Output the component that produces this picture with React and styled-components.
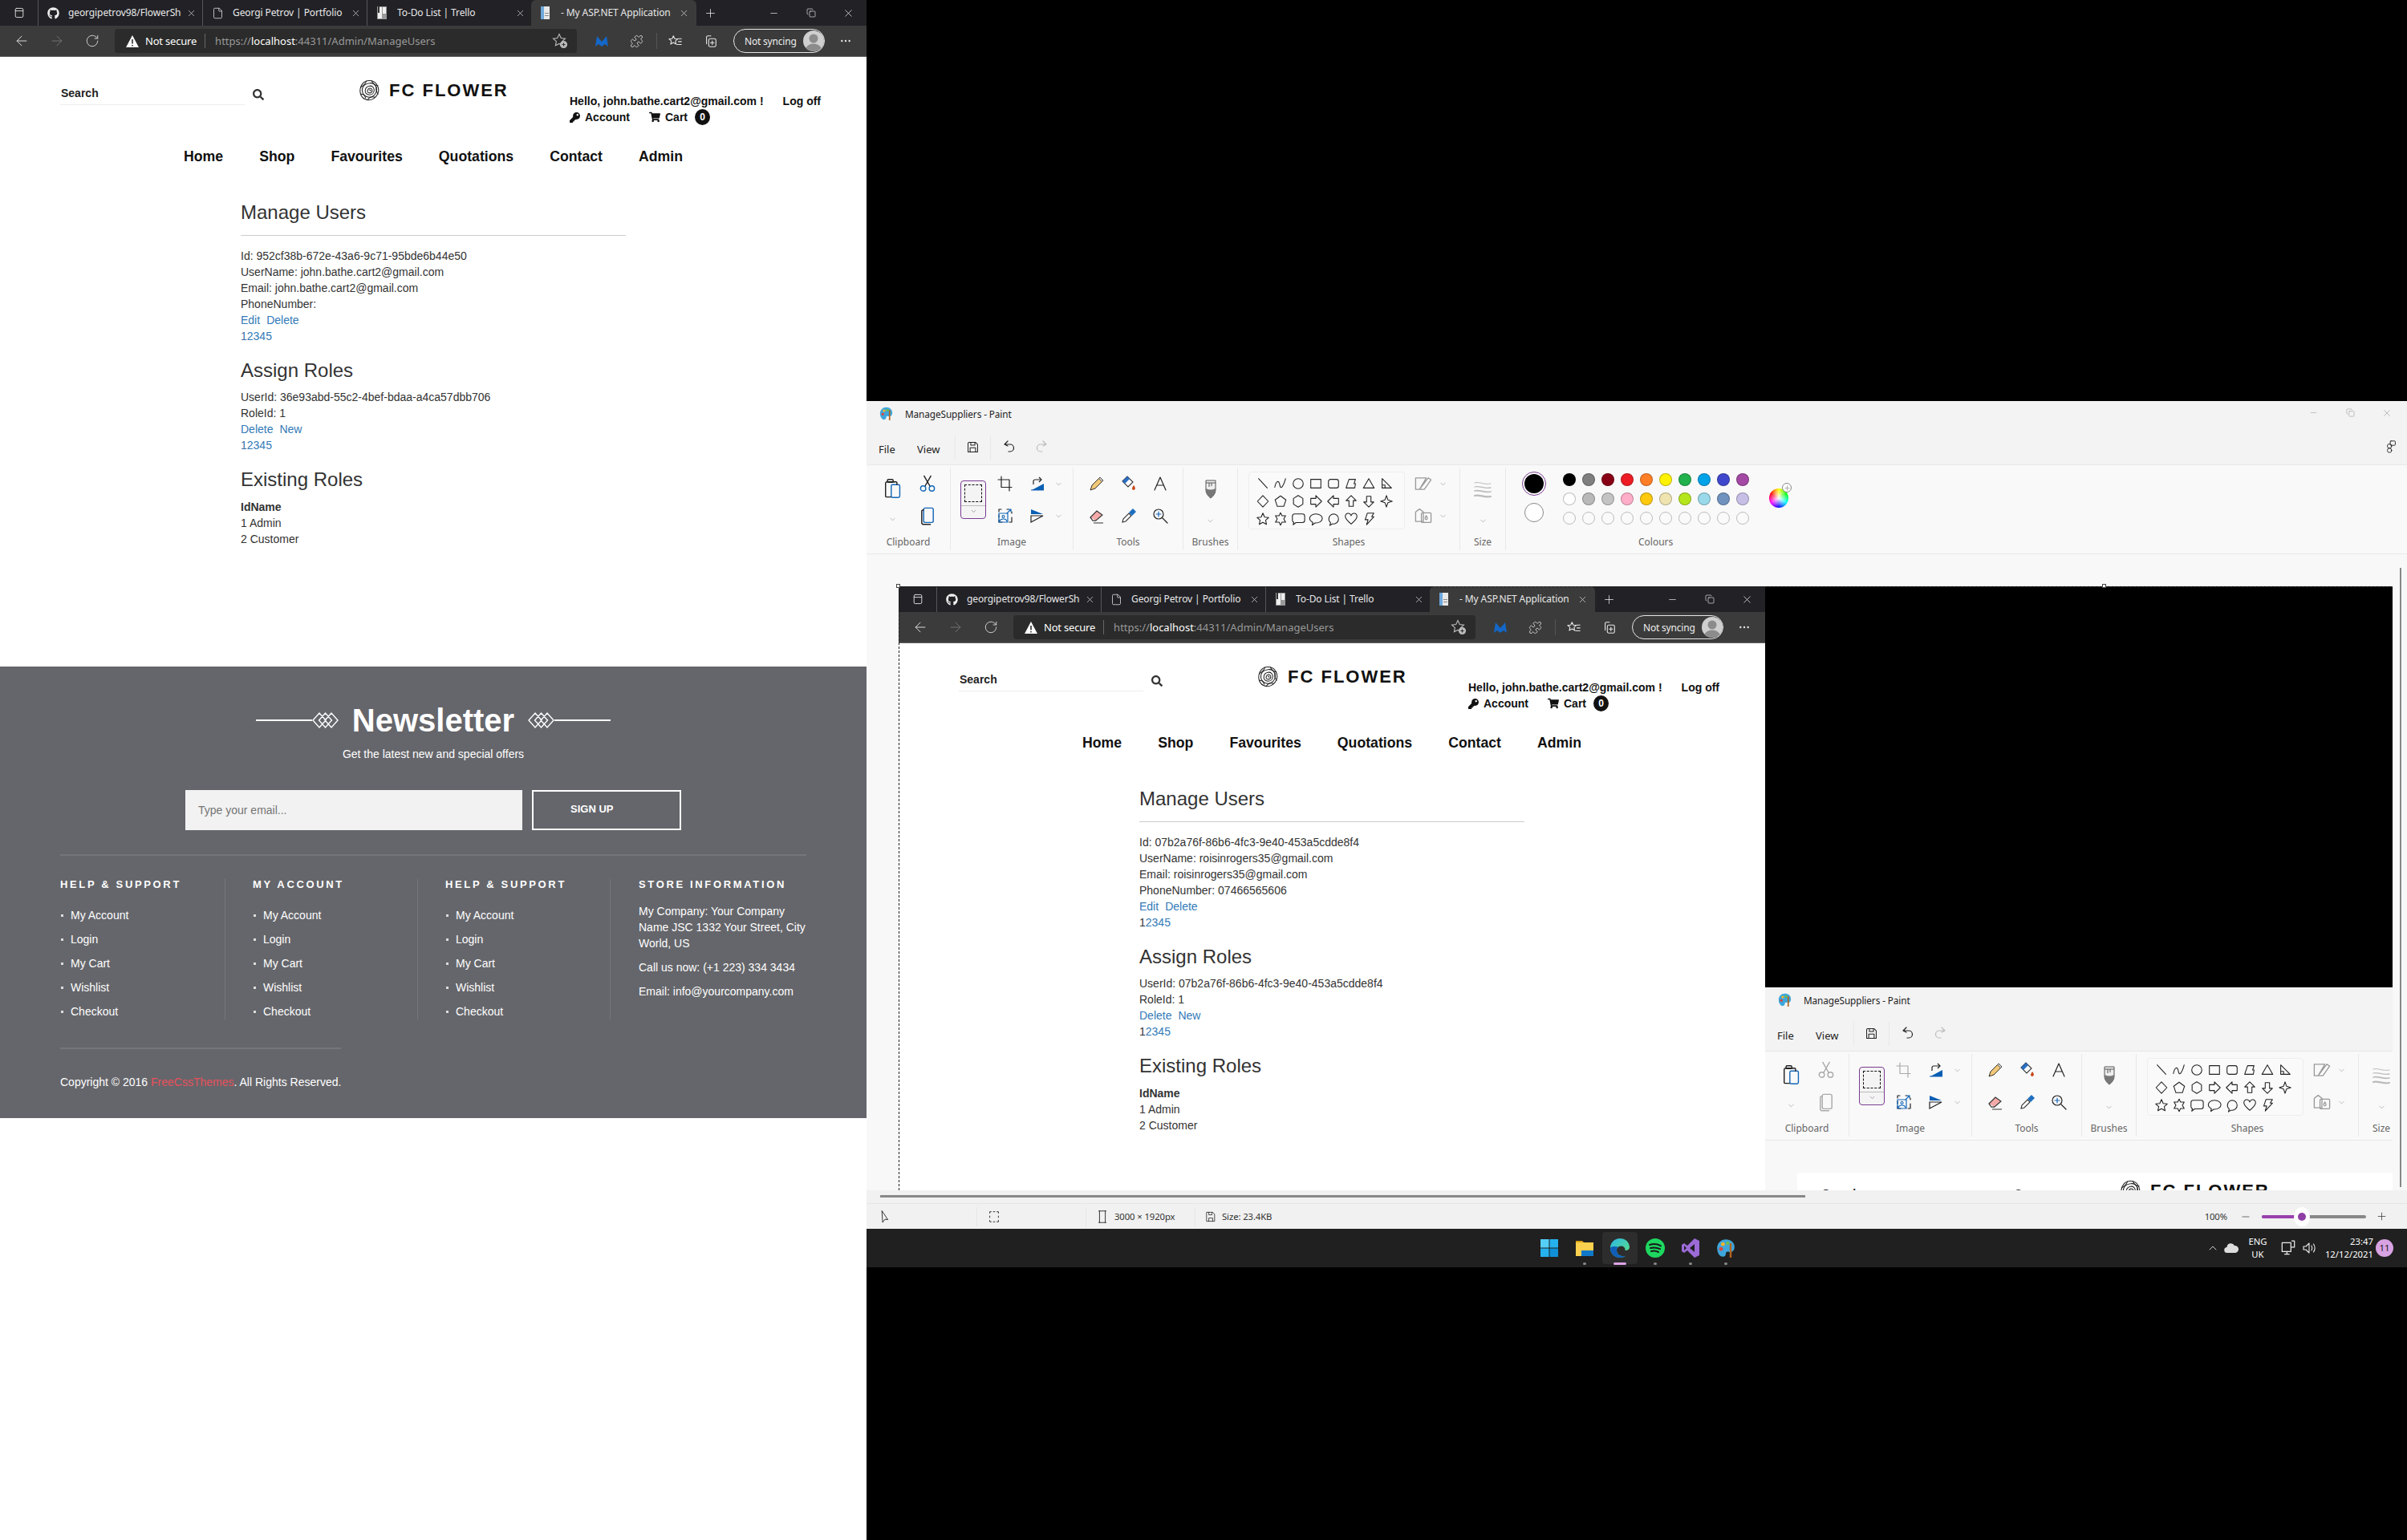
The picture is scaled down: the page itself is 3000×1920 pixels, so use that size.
import React from 'react';
import styled, { createGlobalStyle } from 'styled-components';
import { ArrowLeft, ArrowRight, RotateCw, Plus, Minus, X, File, Puzzle, MoreHorizontal, Copy, ChevronDown, ChevronUp } from 'lucide-react';
import { FaKey, FaShoppingCart, FaSearch, FaGithub } from 'react-icons/fa';

const Global = createGlobalStyle`
  html, body { margin: 0; padding: 0; background: #000; }
  * { box-sizing: border-box; }
`;

const UI = `"Noto Sans", "Open Sans", sans-serif`;
const WEB = `"Liberation Sans", Arial, sans-serif`;

/* ---------- desktop layout ---------- */
const Desk = styled.div`
  display: flex; width: 3000px; height: 1920px; background: #000; overflow: hidden; flex: none;
`;
const BrowserCol = styled.div`
  width: 1080px; flex: none; height: 1920px; background: #fff; display: flex; flex-direction: column;
`;
const RightCol = styled.div`
  width: 1920px; flex: none; height: 1920px; display: flex; flex-direction: column;
`;
const BlackGap = styled.div`
  flex: 0 0 500px; background: #000;
`;

/* ---------- browser chrome ---------- */
const TabBar = styled.div`
  height: 32px; background: #212126; display: flex; align-items: stretch; color: #fff; font: 12px/32px ${UI};
`;
const TabStripBtn = styled.div`
  width: 47px; display: flex; align-items: center; justify-content: center;
`;
const Tab = styled.div`
  width: ${p => (p.$active ? 206 : 205)}px; display: flex; align-items: center; padding-left: 10px; position: relative;
  background: ${p => (p.$active ? '#3b3b3b' : 'transparent')};
  border-radius: ${p => (p.$active ? '6px 6px 0 0' : '0')};
  border-left: ${p => (p.$active ? 'none' : '1px solid #55555a')};
`;
const TabIcon = styled.div`
  width: 16px; height: 16px; flex: none; display: flex; align-items: center; justify-content: center; margin-right: 11px;
`;
const TabText = styled.div`
  width: 141px; overflow: hidden; white-space: nowrap; flex: none; color: #e8e8e8; letter-spacing: -0.1px;
`;
const TabClose = styled.div`
  width: 16px; display: flex; justify-content: center; margin-left: 4px; color: #ddd;
`;
const NewTab = styled.div`
  width: 32px; display: flex; align-items: center; justify-content: center; margin-left: 1px;
`;
const Spacer = styled.div`
  flex: 1;
`;
const WinBtn = styled.div`
  width: ${p => p.$w || 46}px; display: flex; align-items: center; justify-content: center; color: ${p => p.$c || '#fff'};
`;
const Toolbar = styled.div`
  height: 39px; background: #3b3b3b; border-bottom: 1px solid #646464; display: flex; align-items: center; padding-left: 5px; color: #fff;
`;
const NavBtn = styled.div`
  width: ${p => p.$w || 44}px; height: 30px; flex: none; display: flex; align-items: center; justify-content: center;
  color: ${p => (p.$dim ? '#777' : '#e8e8e8')};
`;
const Address = styled.div`
  width: 576px; height: 30px; margin: 0 10px 0 6px; flex: none; background: #2b2b2b; border-radius: 4px;
  display: flex; align-items: center; padding-left: 13px; font: 13px ${UI}; color: #9a9a9a; white-space: nowrap;
`;
const NotSecure = styled.span`
  color: #fff; margin-left: 7px; letter-spacing: -0.2px;
`;
const AddrSep = styled.div`
  width: 1px; height: 18px; background: #666; margin: 0 12px 0 10px;
`;
const Bright = styled.span`
  color: #fff;
`;
const AddrStar = styled.div`
  margin-left: auto; margin-right: 11px; display: flex; color: #bbb;
`;
const ToolSep = styled.div`
  width: 1px; height: 20px; background: #555; margin: 0 2px; flex: none;
`;
const SyncPill = styled.div`
  width: 114px; height: 30px; margin-left: 5px; border: 1.5px solid #e6e6e6; border-radius: 15px; flex: none;
  display: flex; align-items: center; padding-left: 13px; font: 12px ${UI}; color: #eee; gap: 8px; white-space: nowrap; letter-spacing: -0.2px;
`;
const Avatar = styled.div`
  width: 26px; height: 26px; border-radius: 50%; background: #cfcfcf; overflow: hidden; display: flex; flex: none;
`;

/* ---------- web page ---------- */
const WebPage = styled.div`
  font: 14px/20px ${WEB}; color: #333; flex: 1;
`;
const HeaderRow = styled.div`
  height: 91px; width: 1080px; display: grid; grid-template-columns: 372px 263px 1fr; padding-left: 75px; background: #fff; color: #111;
`;
const SearchCol = styled.div`
  padding-top: 30px; display: flex; align-items: flex-start;
`;
const SearchField = styled.div`
  width: 230px; height: 30px; border-bottom: 1px solid #eee; font: bold 14px/30px ${WEB}; color: #222; padding-left: 1px;
`;
const SearchIcon = styled.div`
  margin: 10px 0 0 10px; color: #333; display: flex;
`;
const LogoCol = styled.div`
  padding-top: 28px; display: flex; align-items: flex-start; gap: 11px; font: bold 22px/28px ${WEB}; letter-spacing: 2px; color: #111; white-space: nowrap;
`;
const AccountCol = styled.div`
  padding-top: 45px; font: bold 14px/20px ${WEB}; color: #111; white-space: nowrap;
`;
const AccountRow = styled.div`
  display: flex; align-items: center; height: 20px;
`;
const LogOff = styled.span`
  margin-left: 24px;
`;
const AccountLink = styled.span`
  display: inline-flex; align-items: center; gap: 6px; margin-right: ${p => p.$mr || 0}px;
`;
const Badge = styled.span`
  width: 19px; height: 20px; border-radius: 50%; background: #111; color: #fff; font: bold 12px/20px ${WEB}; text-align: center; margin-left: 9px;
`;
const NavRow = styled.nav`
  height: 66px; padding-left: 229px; display: flex; align-items: center; gap: 45px; font: bold 17.7px ${WEB}; color: #111; white-space: nowrap;
`;
const Main = styled.main`
  height: 603px; padding: 24px 0 0 300px;
`;
const Title = styled.h2`
  margin: ${p => p.$mt || 0}px 0 ${p => p.$mb || 0}px; font: 400 24px/26px ${WEB}; color: #333; width: 480px;
`;
const Rule = styled.hr`
  margin: 15px 0; width: 480px; border: 0; border-top: 1px solid #ccc; height: 1px;
`;
const Line = styled.div`
  height: 20px; white-space: nowrap; font-weight: ${p => (p.$bold ? 700 : 400)};
`;
const A = styled.span`
  color: #337ab7; margin-right: ${p => p.$mr || 0}px;
`;
const Dark = styled.span`
  color: ${p => p.$c};
`;

/* ---------- footer ---------- */
const Footer = styled.footer`
  height: 563px; background: #65666b; color: #fff; padding-top: 44px; font: 14px/20px ${WEB}; overflow: hidden;
`;
const NewsRow = styled.div`
  height: 46px; display: flex; align-items: center; justify-content: center; gap: 17px;
`;
const NewsTitle = styled.div`
  font: bold 40px/46px ${WEB}; color: #fff;
`;
const NewsOrn = styled.div`
  display: flex; align-items: center; flex-direction: ${p => (p.$rev ? 'row-reverse' : 'row')};
`;
const OrnLine = styled.div`
  width: 70px; height: 2px; background: #fff;
`;
const NewsSub = styled.div`
  margin-top: 9px; text-align: center; height: 20px;
`;
const SignForm = styled.div`
  margin: 35px 0 0 231px; display: flex; gap: 12px;
`;
const EmailBox = styled.div`
  width: 420px; height: 50px; background: #f2f2f2; color: #757575; font: 14px/50px ${WEB}; padding-left: 16px;
`;
const SignBtn = styled.div`
  width: 186px; height: 50px; border: 2.5px solid #fff; font: bold 13px/43px ${WEB}; padding-left: 46px;
`;
const FootRule = styled.div`
  width: ${p => p.$w}px; height: 2px; background: #75767b; margin: ${p => p.$mt}px 0 0 75px;
`;
const FootCols = styled.div`
  margin: 29px 0 0 75px; display: flex; height: 175px;
`;
const FootCol = styled.div`
  width: ${p => p.$w}px; padding-left: ${p => p.$pl || 0}px; border-right: ${p => (p.$last ? 'none' : '1px solid #75767b')}; flex: none;
`;
const FootHead = styled.div`
  font: bold 13px/14px ${WEB}; letter-spacing: 2.65px; white-space: nowrap;
`;
const LinkList = styled.ul`
  list-style: none; margin: 21px 0 0; padding: 0;
`;
const LinkItem = styled.li`
  height: 20px; margin-bottom: 10px; padding-left: 13px; position: relative; white-space: nowrap;
  &::before { content: ''; position: absolute; left: 1px; top: 9px; width: 3px; height: 3px; background: #ddd; }
`;
const StoreText = styled.p`
  margin: 0 0 10px; line-height: 20px; white-space: nowrap;
  &:first-of-type { margin-top: 16px; }
`;
const Copyright = styled.div`
  margin: 31px 0 0 75px; height: 20px; white-space: nowrap;
`;
const Red = styled.span`
  color: #e8505b;
`;

/* ---------- paint ---------- */
const Paint = styled.div`
  flex: 0 0 1080px; width: 1920px; display: flex; flex-direction: column; font-family: ${UI}; color: #222;
`;
const TitleBar = styled.div`
  flex: 0 0 45px; background: #f3f3f3; display: flex; align-items: center; padding-left: 16px; font-size: 11.8px;
`;
const TitleText = styled.span`
  margin-left: 15px; margin-top: -14px; letter-spacing: -0.1px;
`;
const TitleIcon = styled.div`
  margin-top: -14px; display: flex;
`;
const PaintWin = styled.div`
  margin-left: auto; display: flex; margin-top: -16px; align-items: center; color: #888; padding-right: 2px;
`;
const MenuBar = styled.div`
  flex: 0 0 34px; background: #f3f3f3; display: flex; align-items: flex-start; padding-left: 15px; font-size: 13px; color: #222;
`;
const MenuItem = styled.div`
  width: ${p => p.$w}px; line-height: 30px; flex: none;
`;
const MenuSep = styled.div`
  width: 1px; height: 30px; background: #e8e8e8; flex: none; margin: -2px 0 0;
`;
const MenuIcon = styled.div`
  width: ${p => p.$w}px; height: 26px; display: flex; align-items: center; justify-content: center; flex: none; margin-top: -1px;
`;
const Ribbon = styled.div`
  flex: 0 0 112px; display: flex; background: #f9f9f9; border-top: 1px solid #e8e8e8; border-bottom: 1px solid #e8e8e8; padding-top: 3px;
`;
const Group = styled.div`
  width: ${p => p.$w}px; flex: none; height: 103px; border-right: 1px solid #e9e9e9; position: relative; display: flex; flex-direction: column;
  ${p => p.$flex && 'flex: 1; border-right: none;'}
`;
const GroupBody = styled.div`
  flex: 1; display: flex; padding-left: ${p => p.$pl || 0}px; min-height: 0;
`;
const GroupLabel = styled.div`
  height: 20px; flex: none; text-align: ${p => (p.$pl ? 'left' : 'center')}; padding-left: ${p => p.$pl || 0}px; font-size: 12px; line-height: 20px; color: #666;
`;
const Stack = styled.div`
  width: ${p => p.$w || 40}px; display: flex; flex-direction: column; flex: none;
`;
const Cell = styled.div`
  height: ${p => p.$h || 40}px; margin-left: ${p => p.$ml || 0}px; display: flex; align-items: center; justify-content: center; flex: none;
`;
const SelectBtn = styled.div`
  width: 32px; height: 48px; margin: 16px 0 0 4px; border: 1.2px solid #7a3b92; border-radius: 4px; background: #f4f4f4;
  display: flex; flex-direction: column; align-items: center; padding-top: 4px;
`;
const SelectDash = styled.div`
  width: 22px; height: 22px; border: 1.3px dashed #111;
`;
const SelectFoot = styled.div`
  margin-top: 4px; width: 100%; border-top: 1px solid #bbb; display: flex; justify-content: center; padding-top: 2px; color: #888;
`;
const ShapeBox = styled.div`
  width: 195px; height: 72px; margin: 5px 0 0 13px; border: 1px solid #eee; border-radius: 4px; background: #fafafa;
  display: grid; grid-template-columns: repeat(8, 22px); grid-auto-rows: 22px; padding: 3px 0 0 6px; flex: none;
`;
const ShapeCell = styled.div`
  display: flex; align-items: center; justify-content: center;
`;
const Current = styled.div`
  width: 64px; flex: none; display: flex; flex-direction: column; align-items: center; margin-left: 3px;
`;
const BigBlack = styled.div`
  width: 30px; height: 30px; margin-top: 5px; border: 1px solid #7a3b92; border-radius: 50%; padding: 2px; background: #fff;
  &::after { content: ''; display: block; width: 100%; height: 100%; background: #000; border-radius: 50%; }
`;
const BigWhite = styled.div`
  width: 24px; height: 24px; margin-top: 9px; border: 1px solid #888; border-radius: 50%; background: #fff;
`;
const Palette = styled.div`
  display: grid; grid-template-columns: repeat(10, 16px); grid-auto-rows: 16px; gap: 8px; margin: 7px 0 0 4px; flex: none;
`;
const Swatch = styled.div`
  width: 16px; height: 16px; border-radius: 50%; background: ${p => p.$c || '#fafafa'}; border: 1px solid ${p => (p.$c ? 'rgba(0,0,0,.25)' : '#bdbdbd')};
`;
const WheelBox = styled.div`
  position: relative; margin: 26px 0 0 25px; width: 24px; height: 24px;
`;
const Wheel = styled.div`
  width: 24px; height: 24px; border-radius: 50%;
  background: radial-gradient(circle at 50% 50%, #fff 0, rgba(255,255,255,0) 70%), conic-gradient(#ff0 0deg, #0f0 60deg, #0ff 120deg, #00f 180deg, #f0f 240deg, #f00 300deg, #ff0 360deg);
`;
const WheelPlus = styled.div`
  position: absolute; top: -7px; right: -4px; width: 12px; height: 12px; border-radius: 50%; background: #fff; border: 1px solid #888;
  color: #777; display: flex; align-items: center; justify-content: center;
`;
const CanvasRow = styled.div`
  flex: 0 0 793px; display: flex; background: #f8f8f8; padding: 40px 0 0 40px; overflow: hidden; position: relative;
`;
const Sheet = styled.div`
  width: 1862px; flex: none; height: 753px; overflow: hidden; background: ${p => p.$bg}; border-radius: ${p => p.$r || 0}px; position: relative;
`;
const Selection = styled.div`
  position: absolute; left: 0; top: 0; width: 100%; height: 100%; border-top: 1px dashed #222; border-left: 1px dashed #222; pointer-events: none;
`;
const Handle = styled.div`
  position: absolute; top: -3px; left: ${p => p.$x}px; width: 5px; height: 5px; background: #fff; border: 1px solid #444;
`;
const HandleLayer = styled.div`
  position: absolute; left: 40px; top: 40px; width: 0; height: 0;
`;
const VScroll = styled.div`
  flex: 0 0 18px; position: relative;
  &::after { content: ''; position: absolute; left: 9px; top: -23px; width: 2px; bottom: 4px; background: #888; }
`;
const HScroll = styled.div`
  flex: 0 0 16px; background: #f1f1f1; padding: 6px 0 0 17px;
`;
const HThumb = styled.div`
  width: 1153px; height: 3px; background: #888;
`;
const StatusBar = styled.div`
  flex: 0 0 32px; background: #f1f1f1; border-top: 1px solid #e6e6e6; display: flex; align-items: center; font-size: 11.3px; color: #333; letter-spacing: -0.1px;
`;
const StatusCell = styled.div`
  width: ${p => p.$w}px; height: 24px; padding-left: ${p => p.$pl || 10}px; border-right: ${p => (p.$last ? 'none' : '1px solid #e6e6e6')}; display: flex; align-items: center; gap: 6px; flex: none; white-space: nowrap;
`;
const Zoomer = styled.div`
  margin-left: auto; display: flex; align-items: center; padding-right: 24px;
`;
const ZoomTrack = styled.div`
  width: 130px; height: 4px; background: #888; border-radius: 2px; position: relative; margin: 0 12px 0 -3px;
`;
const ZoomFill = styled.div`
  width: 42px; height: 4px; background: #9a3fae; border-radius: 2px;
`;
const ZoomThumb = styled.div`
  position: absolute; left: 40px; top: -10px; width: 20px; height: 24px; border-radius: 50%; background: #fff;
  &::after { content: ''; position: absolute; left: 5px; top: 7px; width: 10px; height: 10px; border-radius: 50%; background: #8e3ea5; }
`;

/* ---------- taskbar ---------- */
const Taskbar = styled.div`
  flex: 0 0 48px; background: #202020; display: flex; align-items: center; padding-left: 829px; color: #fff; font-size: 11.3px;
`;
const TaskCell = styled.div`
  width: 44px; height: 40px; display: flex; align-items: center; justify-content: center; position: relative; flex: none; border-radius: 4px;
  background: ${p => (p.$active ? '#2d2d2d' : 'transparent')};
  &::after {
    content: ''; position: absolute; bottom: -1px; left: 50%; height: 3px; border-radius: 2px;
    width: ${p => (p.$active ? 16 : p.$dot ? 4 : 0)}px; margin-left: ${p => (p.$active ? -8 : -2)}px;
    background: ${p => (p.$active ? '#dba4e6' : '#888')};
  }
`;
const Tray = styled.div`
  margin-left: auto; display: flex; align-items: center; padding-right: 17px;
`;
const TrayIcon = styled.div`
  width: ${p => p.$w}px; display: flex; justify-content: center; flex: none;
`;
const TwoLine = styled.div`
  text-align: ${p => p.$align}; line-height: 16px; width: ${p => p.$w}px; flex: none; white-space: nowrap;
`;
const Notif = styled.div`
  width: 22px; height: 22px; border-radius: 50%; background: #d8a3e3; color: #222; text-align: center; line-height: 22px; margin-left: 3px; flex: none;
`;

/* ---------- drawings ---------- */
const Svg = ({ s = 20, h, vb = '0 0 20 20', sw = 1.2, c = '#222', children }) => (
  <svg width={s} height={h || s} viewBox={vb} fill="none" stroke={c} strokeWidth={sw} strokeLinejoin="round" strokeLinecap="round">{children}</svg>
);

const Flower = () => (
  <Svg s={27} vb="0 0 28 28" sw={1.1} c="#222">
    <path d="M14 1.5c4 0 7 1.5 9 4.5s3.500 6 2.500 10-3 7-6.500 9-8 2-11 .5-5.500-5-6-9S3 8 5.500 5 10 1.500 14 1.500z" />
    <path d="M14 5c4-1 8 2 9 6s-1 9-5 11-8 1-11-2-3-8-1-11 5-3.500 8-4z" />
    <path d="M14 8.500c3.500-.5 6 2 6 5.500s-2.500 6-6 6-6-2.500-5.500-6 2.500-5 5.500-5.500z" />
    <path d="M14 11.500c2-.5 3.500 1 3.500 3s-1.500 3-3.500 3-3-1.500-2.500-3 1-2.500 2.500-3z" />
    <path d="M3 10c4-2 6-5 7-8M25 8c-3 0-6-2-8-6M25 19c-2-3-3-6-2-9M12 26c2-3 5-4 9-3M3 19c3 0 5 2 6 5" />
    <path d="M14 13.500c1 0 1.500.7 1.500 1.500" />
  </Svg>
);
const Diamonds = ({ flip }) => (
  <svg width="33" height="24" viewBox="0 0 33 24" fill="none" stroke="#fff" strokeWidth="1.4" style={{ transform: flip ? 'scaleX(-1)' : 'none' }}>
    <path d="M1 12l8-9 8 9-8 9zM8.500 12l8-9 8 9-8 9zM16 12l8-9 8 9-8 9z" />
  </svg>
);
const StripIcon = () => (
  <Svg s={16} c="#ddd"><rect x="4" y="3" width="12" height="14" rx="2" /><path d="M4 7h12" /></Svg>
);
const PageIcon = () => (
  <svg width="16" height="16" viewBox="0 0 16 16"><rect x="2" y="0" width="11" height="16" fill="#e8e8e8" /><rect x="2" y="0" width="4" height="16" fill="#6ea8dc" /><rect x="7" y="8" width="5" height="1" fill="#888" /><rect x="7" y="11" width="5" height="1" fill="#888" /></svg>
);
const TrelloIcon = () => (
  <svg width="16" height="16" viewBox="0 0 16 16"><rect x="2" y="0" width="12" height="16" fill="#999" /><rect x="3" y="1" width="5" height="14" fill="#eee" /><rect x="9" y="1" width="4" height="8" fill="#eee" /><rect x="3" y="0" width="2" height="8" fill="#333" /></svg>
);
const Malware = () => (
  <svg width="18" height="16" viewBox="0 0 18 16"><path d="M1 15L3 2l6 7 6-7 2 13-4-3-4 3-4-3z" fill="#1467c8" /></svg>
);
const FavIcon = () => (
  <Svg s={18} c="#e8e8e8"><path d="M7 3l1.800 4 4.200.4-3.200 2.800 1 4.300L7 12.300 3.200 14.500l1-4.300L1 7.400 5.200 7zM14 7h4M14 11h4M12 15h6" /></Svg>
);
const Collections = () => (
  <Svg s={18} c="#e8e8e8"><path d="M4 14V5a2 2 0 012-2h4" /><rect x="7" y="7" width="10" height="11" rx="2" /><path d="M12 10v5M9.500 12.500h5" /></Svg>
);
const StarPlus = () => (
  <svg width="20" height="20" viewBox="0 0 20 20" fill="none" stroke="#bbb" strokeWidth="1.1"><path d="M9 1.500l2.300 5 5.200.6-3.900 3.500 1 5.200L9 13.400l-4.600 2.400 1-5.200L1.500 7.100l5.200-.6z" /><circle cx="14.500" cy="14.500" r="4" fill="#bbb" /><path d="M14.500 12.500v4M12.500 14.500h4" stroke="#2b2b2b" /></svg>
);
const AvatarFace = () => (
  <svg width="26" height="26" viewBox="0 0 26 26"><circle cx="13" cy="10" r="5.500" fill="#8c8c8c" /><ellipse cx="13" cy="24" rx="10" ry="7.500" fill="#8c8c8c" /></svg>
);
const Warn = () => (
  <svg width="18" height="17" viewBox="0 0 18 17"><path d="M9 1l8 15H1z" fill="#fff" /><path d="M9 6v5.500M9 13v1.500" stroke="#222" strokeWidth="1.500" /></svg>
);
const PaintLogo = ({ s = 20 }) => (
  <svg width={s} height={s} viewBox="0 0 20 20"><path d="M10 1c5 0 9 3 9 8 0 4-3 6-6 5-2-.7-3 .5-3 2s-1 3-3 3C3 19 1 14 1 10 1 5 5 1 10 1z" fill="#3ea6dc" /><circle cx="7" cy="6" r="2" fill="#f0b429" /><circle cx="12" cy="5" r="1.800" fill="#6cbf4b" /><circle cx="5" cy="11" r="2" fill="#d8483f" /><rect x="14" y="5" width="2" height="15" fill="#b5651d" /></svg>
);
const Caret = () => <ChevronDown size={11} color="#999" strokeWidth={1.4} />;

const Paste = () => (
  <Svg s={22} h={26} vb="0 0 18 22"><path d="M11 4H3.500A1.500 1.500 0 002 5.500V19a1 1 0 001 1h5" /><rect x="4" y="1.500" width="6" height="3" rx="1" /><rect x="8" y="7" width="9" height="13.500" rx="1.500" stroke="#1467b8" /><path d="M11 4h2a1 1 0 011 1v2" /></Svg>
);
const Scissors = ({ dim }) => (
  <Svg s={24} c={dim ? '#aaa' : '#222'}><path d="M6.500 2l6 10.500M13.500 2l-6 10.500" /><circle cx="5.500" cy="15" r="2.700" stroke={dim ? '#aaa' : '#1467b8'} /><circle cx="14.500" cy="15" r="2.700" stroke={dim ? '#aaa' : '#1467b8'} /></Svg>
);
const CopyI = ({ dim }) => (
  <Svg s={22} h={24} vb="0 0 18 20" c={dim ? '#aaa' : '#222'}><rect x="5" y="2" width="10" height="15" rx="1.500" stroke={dim ? '#aaa' : '#1467b8'} /><path d="M5 4H4.500A1.500 1.500 0 003 5.500V17a2 2 0 002 2h7" /></Svg>
);
const Crop = ({ dim }) => (
  <Svg s={20} c={dim ? '#aaa' : '#222'}><path d="M5 1v13.500h13M1 5h14v14" /></Svg>
);
const Rotate = () => (
  <svg width="20" height="20" viewBox="0 0 20 20" fill="none"><path d="M5 11V7a2 2 0 012-2h8" stroke="#222" strokeWidth="1.200" /><path d="M12 2l3 3-3 3" stroke="#222" strokeWidth="1.200" /><path d="M18 18H3l15-8z" fill="#0a5fb4" /><path d="M2 18h16" stroke="#0a5fb4" /></svg>
);
const Resize = () => (
  <Svg s={20} c="#222"><path d="M2 5V2h3M2 9v3M6 18H2v-3M12 2h2M18 12v6h-3M18 7V5" /><rect x="2" y="7" width="11" height="11" stroke="#1467b8" /><circle cx="7.500" cy="11" r="1.500" stroke="#1467b8" /><path d="M3 17c1-4 8-4 9 0" stroke="#1467b8" /><path d="M12 7l5-5M14 2h3v3" stroke="#1467b8" /></Svg>
);
const Flip = () => (
  <svg width="20" height="20" viewBox="0 0 20 20" fill="none"><path d="M2 2l15 6H2z" fill="#0a5fb4" /><path d="M2 10h15L2 18z" stroke="#222" strokeWidth="1.200" /></svg>
);
const Pencil = () => (
  <svg width="20" height="20" viewBox="0 0 20 20"><path d="M2 18l2-6L14 2l4 4L8 16z" fill="#f0c878" stroke="#333" strokeWidth="1" /><path d="M14 2l4 4-1.500 1.500-4-4z" fill="#ddd" stroke="#333" strokeWidth=".8" /></svg>
);
const Fill = () => (
  <svg width="20" height="20" viewBox="0 0 20 20"><path d="M2 7l6-6 7 7-6 6z" fill="#fff" stroke="#333" strokeWidth="1.100" /><path d="M2 7l6-6 3 3-6 6z" fill="#2a6fc4" /><path d="M16 12c2 2.500 2 3.500 1.800 4.500a2 2 0 01-3.800 0c-.2-1 .5-2 2-4.500z" fill="#c8491c" /></svg>
);
const TextA = () => (
  <Svg s={20} c="#222"><path d="M3 18L10 2l7 16M5.500 12h9" /></Svg>
);
const Eraser = () => (
  <svg width="20" height="20" viewBox="0 0 20 20"><path d="M2 12l8-8 7 5-8 7H5z" fill="#f3aaa8" stroke="#333" strokeWidth="1.100" /><path d="M2 12l3 4h4M6 19h12" stroke="#333" strokeWidth="1.100" fill="#fff" /></svg>
);
const Picker = () => (
  <svg width="20" height="20" viewBox="0 0 20 20"><path d="M2 18l1-4 7-7 3 3-7 7z" fill="#fff" stroke="#333" strokeWidth="1.100" /><path d="M10 6l5-5 4 4-5 5z" fill="#1f6fc0" /></svg>
);
const Magnify = () => (
  <Svg s={20} c="#222"><circle cx="8" cy="8" r="6" /><path d="M13 13l6 6" /><path d="M8 5v6M5 8h6" stroke="#1467b8" /></Svg>
);
const Brush = () => (
  <svg width="16" height="26" viewBox="0 0 16 26"><path d="M2 2h12v12c0 4-3 8-6 10-3-2-6-6-6-10z" fill="#eee" stroke="#555" /><path d="M2 12c4 2 8 2 12 0v2c0 4-3 8-6 10-3-2-6-6-6-10z" fill="#777" /><path d="M2 5h12M6 5v5M9 5v4" stroke="#555" fill="none" /></svg>
);
const Outline = () => (
  <Svg s={24} c="#999" sw={1.100}><path d="M2 4h11l-1 2-6 10H2zM15 4l3 2-7 10H6z" /></Svg>
);
const FillShape = () => (
  <Svg s={24} c="#999" sw={1.100}><path d="M2 6l4-3 4 3v10H2z" /><rect x="8" y="7" width="10" height="10" rx="1" /><path d="M13 10c1.500 2 1.500 4 0 4s-1.500-2 0-4z" /></Svg>
);
const SizeLines = () => (
  <Svg s={26} vb="0 0 26 26" c="#bbb" sw={1}><path d="M3 5c6-2 12 3 20 1" /><path d="M3 10c6-2 12 3 20 1" strokeWidth="1.300" /><path d="M3 15c6-2 12 3 20 1" strokeWidth="1.700" /><path d="M3 21c6-2 12 3 20 1" strokeWidth="2.200" /></Svg>
);
const SHAPES = [
  'M4 3l12 13', 'M2 15C4 5 8 5 9 12s5 2 8-9', 'M10 3a7 7 0 100 14 7 7 0 000-14z', 'M3 4h14v12H3z',
  'M6 4h8a3 3 0 013 3v6a3 3 0 01-3 3H6a3 3 0 01-3-3V7a3 3 0 013-3z', 'M7 4h9l-2 6h2l-1 6H3z', 'M10 3l7.500 13h-15z', 'M4 3l13 13H4zM4 12h4v4',
  'M10 2l7.500 8-7.500 8-7.500-8z', 'M10 2.500l7.500 5.500-3 9h-9l-3-9z', 'M10 2l6.500 4v8L10 18l-6.500-4V6z', 'M3 6h7V2l8 8-8 8v-4H3z',
  'M17 6h-7V2l-8 8 8 8v-4h7z', 'M10 2l7 7h-4v8H7V9H3z', 'M10 18l7-7h-4V3H7v8H3z', 'M10 2l2 6 6 2-6 2-2 6-2-6-6-2 6-2z',
  'M10 2l2.400 5.500 5.600.6-4.200 3.800 1.200 5.600L10 14.700 5 17.500l1.200-5.600L2 8.100l5.600-.6z', 'M10 1.500l2 4h5l-2.500 4.500 2.500 4.500h-5l-2 4-2-4H3l2.500-4.500L3 5.500h5z', 'M5 3h11a3 3 0 013 3v6a3 3 0 01-3 3H7l-4 3 1-3.200A3 3 0 012 12V6a3 3 0 013-3z', 'M10 3c5 0 9 2.800 9 6.300s-4 6.200-9 6.200H9l-4 3 .8-3.800C3 13.500 1.500 11.500 1.500 9.300 1.500 5.800 5 3 10 3z',
  'M10 3a7 7 0 110 14H8l-3 2 1-3.800A7 7 0 0110 3z', 'M10 17C4 12 2 10 2 7a4 4 0 018-1.500A4 4 0 0118 7c0 3-2 5-8 10z', 'M8 2h9l-3 5h3L7 18l2-7H5z',
];
const COLORS = ['#000', '#7f7f7f', '#880015', '#ed1c24', '#ff7f27', '#fff200', '#22b14c', '#00a2e8', '#3f48cc', '#a349a4',
  '#fff', '#b9b9b9', '#c3c3c3', '#ffaec9', '#ffc90e', '#efe4b0', '#b5e61d', '#99d9ea', '#7092be', '#c8bfe7',
  null, null, null, null, null, null, null, null, null, null];

const Windows = () => (
  <svg width="24" height="24" viewBox="0 0 24 24"><rect x="1" y="1" width="10.500" height="10.500" fill="#55cff5" /><rect x="12.500" y="1" width="10.500" height="10.500" fill="#25b2ee" /><rect x="1" y="12.500" width="10.500" height="10.500" fill="#25b2ee" /><rect x="12.500" y="12.500" width="10.500" height="10.500" fill="#0f8fd8" /></svg>
);
const Explorer = () => (
  <svg width="24" height="24" viewBox="0 0 24 24"><path d="M1 3h8l2 2h-10z" fill="#d99f12" /><rect x="1" y="5" width="22" height="17" fill="#fbd04e" /><rect x="8" y="15" width="15" height="7" fill="#0f78c8" /></svg>
);
const Edge = () => (
  <svg width="26" height="26" viewBox="0 0 26 26">
    <defs>
      <linearGradient id="edgeTop" x1="0" y1="0" x2="1" y2="1"><stop offset="0" stopColor="#2bb9e8" /><stop offset="1" stopColor="#5fe07a" /></linearGradient>
    </defs>
    <path d="M13 1C6.400 1 1 6.400 1 13c0 6.600 5.400 12 12 12 2.500 0 5-.8 7-2.200-5 1.200-10.500-1.200-11-6.300-.3-3 2-6 5.500-6s5.500 2.500 5 5.500c2.500.5 5.500-1 5.500-4C25 5.500 19.600 1 13 1z" fill="url(#edgeTop)" />
    <path d="M1 13c0 6.600 5.400 12 12 12 2.500 0 5-.8 7-2.200-5 1.200-10.500-1.200-11-6.300-.2-2 .6-4 2-5-4.500-.5-8.500-1-10 1.500z" fill="#0f5fb8" />
  </svg>
);
const Spotify = () => (
  <svg width="24" height="24" viewBox="0 0 24 24" fill="none"><circle cx="12" cy="12" r="12" fill="#1ed760" /><path d="M5 8c5-1.500 10-1 14 1.300M6 12c4-1 8-.7 12 1.200M7 16c3-.8 6-.5 9 1" stroke="#191919" strokeWidth="2" strokeLinecap="round" /></svg>
);
const VS = () => (
  <svg width="24" height="26" viewBox="0 0 24 26"><path d="M17 1l6 3v18l-6 3-9-9-4 3-3-2V9l3-2 4 3z" fill="#9d6bd8" /><path d="M17 8l-6 5 6 5z" fill="#202020" /><path d="M4 10v6l3-3z" fill="#202020" /></svg>
);
const Cloud = () => (
  <svg width="18" height="16" viewBox="0 0 18 16"><path d="M4 14a3.500 3.500 0 01-.5-7A5 5 0 0113 5a4.500 4.500 0 011 9z" fill="#ddd" /></svg>
);
const Network = () => (
  <Svg s={22} vb="0 0 20 20" c="#eee" sw={1.100}><rect x="3" y="4" width="10" height="10" /><path d="M6 17h5M8.500 14v3M14 2h3v7h-3" /></Svg>
);
const Sound = () => (
  <Svg s={20} c="#eee" sw={1.100}><path d="M2 8h3l4-4v12l-4-4H2zM12 7c1 2 1 4 0 6M14.500 5c2 3 2 7 0 10" /></Svg>
);

/* ---------- composites ---------- */
const TABS = [
  { icon: <FaGithub size={15} color="#eee" />, text: 'georgipetrov98/FlowerSho' },
  { icon: <File size={15} color="#ddd" strokeWidth={1.3} />, text: 'Georgi Petrov | Portfolio' },
  { icon: <TrelloIcon />, text: 'To-Do List | Trello' },
  { icon: <PageIcon />, text: '- My ASP.NET Application', active: true },
];

const BrowserChrome = () => (
  <>
    <TabBar>
      <TabStripBtn><StripIcon /></TabStripBtn>
      {TABS.map(t => (
        <Tab key={t.text} $active={t.active}>
          <TabIcon>{t.icon}</TabIcon>
          <TabText>{t.text}</TabText>
          <TabClose><X size={13} strokeWidth={1.3} /></TabClose>
        </Tab>
      ))}
      <NewTab><Plus size={17} strokeWidth={1} /></NewTab>
      <Spacer />
      <WinBtn><Minus size={13} strokeWidth={1.2} /></WinBtn>
      <WinBtn $w={47}><Copy size={12} strokeWidth={1.2} /></WinBtn>
      <WinBtn><X size={15} strokeWidth={1.1} /></WinBtn>
    </TabBar>
    <Toolbar>
      <NavBtn><ArrowLeft size={20} strokeWidth={1.1} /></NavBtn>
      <NavBtn $dim><ArrowRight size={20} strokeWidth={1.1} /></NavBtn>
      <NavBtn><RotateCw size={18} strokeWidth={1.1} /></NavBtn>
      <Address>
        <Warn />
        <NotSecure>Not secure</NotSecure>
        <AddrSep />
        <span>https://<Bright>localhost</Bright>:44311/Admin/ManageUsers</span>
        <AddrStar><StarPlus /></AddrStar>
      </Address>
      <NavBtn $w={41}><Malware /></NavBtn>
      <NavBtn $w={46}><Puzzle size={17} strokeWidth={1.1} /></NavBtn>
      <ToolSep />
      <NavBtn $w={42}><FavIcon /></NavBtn>
      <NavBtn $w={46}><Collections /></NavBtn>
      <SyncPill>Not syncing<Avatar><AvatarFace /></Avatar></SyncPill>
      <NavBtn $w={52}><MoreHorizontal size={16} strokeWidth={1.600} /></NavBtn>
    </Toolbar>
  </>
);

const SiteHeader = () => (
  <HeaderRow>
    <SearchCol>
      <SearchField>Search</SearchField>
      <SearchIcon><FaSearch size={14} /></SearchIcon>
    </SearchCol>
    <LogoCol><Flower />FC FLOWER</LogoCol>
    <AccountCol>
      <AccountRow>Hello, john.bathe.cart2@gmail.com !<LogOff>Log off</LogOff></AccountRow>
      <AccountRow>
        <AccountLink $mr={24}><FaKey size={13} />Account</AccountLink>
        <AccountLink><FaShoppingCart size={14} />Cart</AccountLink>
        <Badge>0</Badge>
      </AccountRow>
    </AccountCol>
  </HeaderRow>
);

const Pager = ({ c }) => (
  <Line><A><Dark $c={c}>1</Dark>2345</A></Line>
);

const FOOT_LINKS = ['My Account', 'Login', 'My Cart', 'Wishlist', 'Checkout'];

const LinkColumn = ({ title, w, pl }) => (
  <FootCol $w={w} $pl={pl}>
    <FootHead>{title}</FootHead>
    <LinkList>{FOOT_LINKS.map(l => <LinkItem key={l}>{l}</LinkItem>)}</LinkList>
  </FootCol>
);

const SiteFooter = () => (
  <Footer>
    <NewsRow>
      <NewsOrn><OrnLine /><Diamonds /></NewsOrn>
      <NewsTitle>Newsletter</NewsTitle>
      <NewsOrn $rev><OrnLine /><Diamonds flip /></NewsOrn>
    </NewsRow>
    <NewsSub>Get the latest new and special offers</NewsSub>
    <SignForm>
      <EmailBox>Type your email...</EmailBox>
      <SignBtn>SIGN UP</SignBtn>
    </SignForm>
    <FootRule $w={930} $mt={30} />
    <FootCols>
      <LinkColumn title="HELP & SUPPORT" w={206} />
      <LinkColumn title="MY ACCOUNT" w={240} pl={34} />
      <LinkColumn title="HELP & SUPPORT" w={240} pl={34} />
      <FootCol $w={250} $pl={35} $last>
        <FootHead>STORE INFORMATION</FootHead>
        <StoreText>My Company: Your Company<br />Name JSC 1332 Your Street, City<br />World, US</StoreText>
        <StoreText>Call us now: (+1 223) 334 3434</StoreText>
        <StoreText>Email: info@yourcompany.com</StoreText>
      </FootCol>
    </FootCols>
    <FootRule $w={350} $mt={35} />
    <Copyright>Copyright © 2016 <Red>FreeCssThemes</Red>. All Rights Reserved.</Copyright>
  </Footer>
);

const SitePage = ({ d }) => (
  <WebPage>
    <SiteHeader />
    <NavRow>
      <span>Home</span><span>Shop</span><span>Favourites</span><span>Quotations</span><span>Contact</span><span>Admin</span>
    </NavRow>
    <Main>
      <Title>Manage Users</Title>
      <Rule />
      <Line>Id: {d.id}</Line>
      <Line>UserName: {d.mail}</Line>
      <Line>Email: {d.mail}</Line>
      <Line>PhoneNumber: {d.phone}</Line>
      <Line><A $mr={8}>Edit</A><A>Delete</A></Line>
      <Pager c={d.pagerOne} />
      <Title $mt={20} $mb={10}>Assign Roles</Title>
      <Line>UserId: {d.userId}</Line>
      <Line>RoleId: 1</Line>
      <Line><A $mr={8}>Delete</A><A>New</A></Line>
      <Pager c={d.pagerOne} />
      <Title $mt={20} $mb={11}>Existing Roles</Title>
      <Line $bold>IdName</Line>
      <Line>1 Admin</Line>
      <Line>2 Customer</Line>
    </Main>
    <SiteFooter />
  </WebPage>
);

const CroppedHeader = styled.div`
  margin: -19px 0 0 -45px; width: 1080px;
`;

const PaintRibbon = ({ dimClip }) => (
  <Ribbon>
    <Group $w={105}>
      <GroupBody $pl={12}>
        <Stack>
          <Cell $h={52}><Paste /></Cell>
          <Cell $h={24}><Caret /></Cell>
        </Stack>
        <Stack $w={48}>
          <Cell><Scissors dim={dimClip} /></Cell>
          <Cell><CopyI dim={dimClip} /></Cell>
        </Stack>
      </GroupBody>
      <GroupLabel>Clipboard</GroupLabel>
    </Group>
    <Group $w={153}>
      <GroupBody $pl={8}>
        <Stack>
          <SelectBtn><SelectDash /><SelectFoot><ChevronDown size={9} /></SelectFoot></SelectBtn>
        </Stack>
        <Stack>
          <Cell><Crop dim={dimClip} /></Cell>
          <Cell><Resize /></Cell>
        </Stack>
        <Stack>
          <Cell><Rotate /></Cell>
          <Cell><Flip /></Cell>
        </Stack>
        <Stack $w={12}>
          <Cell><Caret /></Cell>
          <Cell><Caret /></Cell>
        </Stack>
      </GroupBody>
      <GroupLabel>Image</GroupLabel>
    </Group>
    <Group $w={137}>
      <GroupBody $pl={9}>
        <Stack><Cell><Pencil /></Cell><Cell><Eraser /></Cell></Stack>
        <Stack $w={39}><Cell><Fill /></Cell><Cell><Picker /></Cell></Stack>
        <Stack $w={39}><Cell><TextA /></Cell><Cell><Magnify /></Cell></Stack>
      </GroupBody>
      <GroupLabel>Tools</GroupLabel>
    </Group>
    <Group $w={68}>
      <GroupBody>
        <Stack $w={67}>
          <Cell $h={54}><Brush /></Cell>
          <Cell $h={24}><Caret /></Cell>
        </Stack>
      </GroupBody>
      <GroupLabel>Brushes</GroupLabel>
    </Group>
    <Group $w={277}>
      <GroupBody>
        <ShapeBox>
          {SHAPES.map((d, i) => (
            <ShapeCell key={i}><Svg s={18}><path d={d} /></Svg></ShapeCell>
          ))}
        </ShapeBox>
        <Stack $w={40}>
          <Cell $ml={6}><Outline /></Cell>
          <Cell $ml={6}><FillShape /></Cell>
        </Stack>
        <Stack $w={14}>
          <Cell><Caret /></Cell>
          <Cell><Caret /></Cell>
        </Stack>
      </GroupBody>
      <GroupLabel>Shapes</GroupLabel>
    </Group>
    <Group $w={57}>
      <GroupBody>
        <Stack $w={56}>
          <Cell $h={54}><SizeLines /></Cell>
          <Cell $h={24}><Caret /></Cell>
        </Stack>
      </GroupBody>
      <GroupLabel>Size</GroupLabel>
    </Group>
    <Group $flex>
      <GroupBody>
        <Current><BigBlack /><BigWhite /></Current>
        <Palette>
          {COLORS.map((c, i) => <Swatch key={i} $c={c} />)}
        </Palette>
        <WheelBox><Wheel /><WheelPlus><Plus size={9} strokeWidth={1.5} /></WheelPlus></WheelBox>
      </GroupBody>
      <GroupLabel $pl={165}>Colours</GroupLabel>
    </Group>
  </Ribbon>
);

const PaintWindow = ({ depth, children }) => (
  <Paint>
    <TitleBar>
      <TitleIcon><PaintLogo s={17} /></TitleIcon>
      <TitleText>ManageSuppliers - Paint</TitleText>
      <PaintWin>
        <WinBtn $c="#999"><Minus size={11} strokeWidth={1.200} /></WinBtn>
        <WinBtn $c="#999"><Copy size={11} strokeWidth={1.200} /></WinBtn>
        <WinBtn $c="#999"><X size={14} strokeWidth={1.100} /></WinBtn>
      </PaintWin>
    </TitleBar>
    <MenuBar>
      <MenuItem $w={48}>File</MenuItem>
      <MenuItem $w={47}>View</MenuItem>
      <MenuSep />
      <MenuIcon $w={43}>
        <Svg s={17}><path d="M4 3h10l3 3v11H3V4z" /><path d="M7 3v4h6V3M6 17v-6h8v6" /></Svg>
      </MenuIcon>
      <MenuSep />
      <MenuIcon $w={45}>
        <Svg s={20}><path d="M8 3L4 7l4 2M4 7h7a4.500 4.500 0 010 9H9" /></Svg>
      </MenuIcon>
      <MenuIcon $w={36}>
        <Svg s={20} c="#bbb"><path d="M12 3l4 4-4 2M16 7H9a4.500 4.500 0 000 9h2" /></Svg>
      </MenuIcon>
      <Spacer />
      <MenuIcon $w={40}>
        <Svg s={18} sw={1}><rect x="9" y="2" width="7" height="6" rx="1" /><circle cx="8" cy="9" r="3" /><circle cx="8" cy="15" r="3" /></Svg>
      </MenuIcon>
    </MenuBar>
    <PaintRibbon dimClip={depth === 1} />
    <CanvasRow>
      {children}
      <VScroll />
    </CanvasRow>
    <HScroll><HThumb /></HScroll>
    <StatusBar>
      <StatusCell $w={138} $pl={14}><Svg s={18} sw={1}><path d="M6 2l8 12-4-.5-3 4z" /></Svg></StatusCell>
      <StatusCell $w={136} $pl={12}><Svg s={18} sw={1}><path d="M4 5V3h2M9 3h2M14 3h2v2M16 9v2M16 15v2h-2M11 17H9M6 17H4v-2M4 11V9" /></Svg></StatusCell>
      <StatusCell $w={136} $pl={11}><Svg s={18} sw={1}><path d="M5 2h10M5 18h10M6 2v16M14 2v16" /></Svg>3000 × 1920px</StatusCell>
      <StatusCell $w={110} $pl={11} $last><Svg s={16} sw={1}><path d="M4 3h9l3 3v11H4z" /><path d="M7 3v4h5V3M7 17v-5h6v5" /></Svg>Size: 23.4KB</StatusCell>
      <Zoomer>
        100%
        <WinBtn $w={46} $c="#333"><Minus size={14} strokeWidth={1.2} /></WinBtn>
        <ZoomTrack><ZoomFill /><ZoomThumb /></ZoomTrack>
        <Plus size={15} strokeWidth={1.2} />
      </Zoomer>
    </StatusBar>
    <Taskbar>
      <TaskCell><Windows /></TaskCell>
      <TaskCell $dot><Explorer /></TaskCell>
      <TaskCell $active><Edge /></TaskCell>
      <TaskCell $dot><Spotify /></TaskCell>
      <TaskCell $dot><VS /></TaskCell>
      <TaskCell $dot><PaintLogo s={24} /></TaskCell>
      <Tray>
        <TrayIcon $w={24}><ChevronUp size={16} strokeWidth={1.2} /></TrayIcon>
        <TrayIcon $w={22}><Cloud /></TrayIcon>
        <TwoLine $align="center" $w={44}>ENG<br />UK</TwoLine>
        <TrayIcon $w={32}><Network /></TrayIcon>
        <TrayIcon $w={22}><Sound /></TrayIcon>
        <TwoLine $align="right" $w={68}>23:47<br />12/12/2021</TwoLine>
        <Notif>11</Notif>
      </Tray>
    </Taskbar>
  </Paint>
);

const Capture = ({ data, depth }) => (
  <Desk>
    <BrowserCol>
      <BrowserChrome />
      <SitePage d={data} />
    </BrowserCol>
    <RightCol>
      <BlackGap />
      <PaintWindow depth={depth}>
        {depth === 0 ? (
          <Sheet $bg="#000">
            <Capture data={NESTED} depth={1} />
            <Selection />
          </Sheet>
        ) : (
          <Sheet $bg="#fff" $r={4}>
            <CroppedHeader><SiteHeader /></CroppedHeader>
          </Sheet>
        )}
        {depth === 0 && <HandleLayer><Handle $x={-3} /><Handle $x={1500} /></HandleLayer>}
      </PaintWindow>
    </RightCol>
  </Desk>
);

const TOP = {
  id: '952cf38b-672e-43a6-9c71-95bde6b44e50',
  mail: 'john.bathe.cart2@gmail.com',
  phone: '',
  userId: '36e93abd-55c2-4bef-bdaa-a4ca57dbb706',
  pagerOne: '#3a6ea5',
};
const NESTED = {
  id: '07b2a76f-86b6-4fc3-9e40-453a5cdde8f4',
  mail: 'roisinrogers35@gmail.com',
  phone: '07466565606',
  userId: '07b2a76f-86b6-4fc3-9e40-453a5cdde8f4',
  pagerOne: '#333',
};

export default function App() {
  return (
    <>
      <Global />
      <Capture data={TOP} depth={0} />
    </>
  );
}
